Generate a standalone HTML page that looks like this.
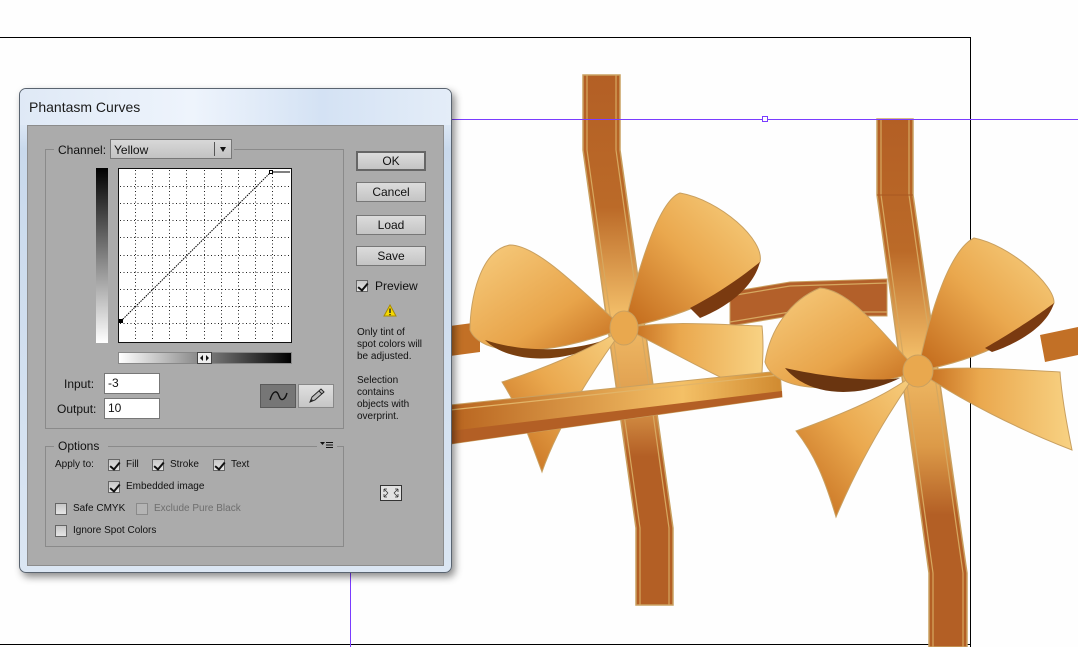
<!DOCTYPE html>
<html><head><meta charset="utf-8"><style>
*{margin:0;padding:0;box-sizing:border-box}
body{width:1078px;height:647px;position:relative;background:#fefefe;overflow:hidden;font-family:"Liberation Sans",sans-serif;color:#111}
.a{position:absolute}
.t{position:absolute;font-size:12px;line-height:14px;white-space:nowrap}
.s{position:absolute;font-size:10px;line-height:12px;white-space:nowrap}
.btn{position:absolute;left:356px;width:70px;height:20px;border:1px solid #777;background:linear-gradient(#dcdcdc,#c4c4c4);font-size:12px;text-align:center;line-height:18px}
.cb{position:absolute;width:12px;height:12px;border:1px solid #666;background:linear-gradient(#c8c8c8,#e6e6e6)}
.cb.c::after{content:"";position:absolute;left:3px;top:0px;width:4px;height:8px;border:solid #111;border-width:0 2px 2px 0;transform:rotate(40deg)}
.grp{position:absolute;border:1px solid #8a8a8a}
.inp{position:absolute;background:#fff;border:1px solid #777;font-size:12px;line-height:18px;padding-left:3px}
</style></head><body>

<svg class="a" style="left:0;top:0" width="1078" height="647">
<defs>
<linearGradient id="v1" x1="0" y1="75" x2="0" y2="605" gradientUnits="userSpaceOnUse"><stop offset="0" stop-color="#b35f25"/><stop offset=".25" stop-color="#bb6a28"/><stop offset=".45" stop-color="#f2bd68"/><stop offset=".6" stop-color="#e0a050"/><stop offset=".72" stop-color="#b35f25"/><stop offset="1" stop-color="#b35f25"/></linearGradient>
<linearGradient id="v2" x1="0" y1="119" x2="0" y2="647" gradientUnits="userSpaceOnUse"><stop offset="0" stop-color="#b35f25"/><stop offset=".25" stop-color="#bb6a28"/><stop offset=".45" stop-color="#f2bd68"/><stop offset=".62" stop-color="#dc9a48"/><stop offset=".75" stop-color="#b35f25"/><stop offset="1" stop-color="#b35f25"/></linearGradient>
<linearGradient id="hb" x1="0" y1="0" x2="1" y2="0"><stop offset="0" stop-color="#b8641f"/><stop offset=".7" stop-color="#f4c066"/><stop offset="1" stop-color="#d08a30"/></linearGradient>
<linearGradient id="g1" x1="0" y1="0" x2="1" y2="1"><stop offset="0" stop-color="#f7cd7f"/><stop offset=".6" stop-color="#e8a44a"/><stop offset="1" stop-color="#c26a1c"/></linearGradient>
<linearGradient id="g2" x1="1" y1="0" x2="0" y2="1"><stop offset="0" stop-color="#f8d283"/><stop offset=".5" stop-color="#eaa84e"/><stop offset="1" stop-color="#c06618"/></linearGradient>
<linearGradient id="g3" x1="1" y1="0" x2="0" y2="0"><stop offset="0" stop-color="#f8d283"/><stop offset=".6" stop-color="#eaa84e"/><stop offset="1" stop-color="#c06618"/></linearGradient>
</defs>
<line x1="0" y1="37.5" x2="970" y2="37.5" stroke="#000"/>
<line x1="970.5" y1="37" x2="970.5" y2="647" stroke="#000"/>
<line x1="0" y1="644.5" x2="970" y2="644.5" stroke="#000"/>
<!-- back ribbons -->
<polygon points="730,292 790,282 887,279 887,316 790,316 730,326" fill="#b3602a" stroke="#c9a060"/>
<polyline points="730,296 790,286 887,283" fill="none" stroke="#d6a860" stroke-width="1.2"/>
<polyline points="730,322 790,312 887,312" fill="none" stroke="#d6a860" stroke-width="1.2"/>
<polygon points="450,326 480,322 480,352 450,356" fill="#c27026"/>
<polygon points="1040,335 1078,327 1078,355 1045,362" fill="#c27026"/>
<!-- vertical ribbons -->
<polygon points="583,75 620,75 620,150 673,528 673,605 636,605 636,528 583,150" fill="url(#v1)" stroke="#c9a060" stroke-width="1.5"/>
<polyline points="587,75 587,150 640,528 640,605" fill="none" stroke="#d6a860" stroke-width="1.2"/>
<polyline points="616,75 616,150 669,528 669,605" fill="none" stroke="#d6a860" stroke-width="1.2"/>
<polygon points="877,119 913,119 913,195 967,573 967,647 929,647 929,573 877,195" fill="url(#v2)" stroke="#c9a060" stroke-width="1.5"/>
<polyline points="881,119 881,195 933,573 933,647" fill="none" stroke="#d6a860" stroke-width="1.2"/>
<polyline points="909,119 909,195 963,573 963,647" fill="none" stroke="#d6a860" stroke-width="1.2"/>
<line x1="877" y1="195" x2="913" y2="195" stroke="#a85822"/>
<!-- bow 1 -->
<path d="M624,328 C590,300 540,245 510,245 C480,250 470,300 470,330 C480,355 540,360 624,328Z" fill="url(#g1)" stroke="#c9a060"/>
<path d="M485,340 C530,355 580,350 610,338 C570,365 510,365 485,340Z" fill="#7a4010"/>
<path d="M624,328 C640,260 660,200 680,193 C720,200 765,240 760,262 C740,290 690,315 624,328Z" fill="url(#g2)" stroke="#c9a060"/>
<path d="M690,308 C725,290 750,270 760,262 C752,292 720,310 700,318Z" fill="#7a3a10"/>
<path d="M624,328 C670,320 720,325 762,326 C765,355 760,380 762,395 C720,380 670,350 624,328Z" fill="url(#g3)" stroke="#c9a060"/>
<path d="M624,328 C600,360 560,420 542,472 C530,440 520,410 502,382 C540,370 590,350 624,328Z" fill="url(#g2)" stroke="#c9a060"/>
<!-- front diagonal ribbon -->
<polygon points="450,405 780,371 782,397 450,444" fill="url(#hb)" stroke="#c9a060"/>
<polygon points="450,431 782,391 782,397 450,444" fill="#b35f25"/>
<line x1="450" y1="410" x2="780" y2="375" stroke="#e2b468" stroke-width="1.2"/>
<ellipse cx="624" cy="328" rx="14" ry="17" fill="#e9a84e" stroke="#c9a060"/>
<!-- bow 2 -->
<path d="M918,371 C880,330 850,290 820,288 C790,300 770,330 765,362 C775,395 850,395 918,371Z" fill="url(#g1)" stroke="#c9a060"/>
<path d="M785,368 C830,378 875,382 900,378 C860,398 810,398 785,368Z" fill="#6a3510"/>
<path d="M918,371 C930,310 950,250 974,238 C1010,245 1055,285 1054,303 C1040,330 980,360 918,371Z" fill="url(#g2)" stroke="#c9a060"/>
<path d="M985,348 C1020,328 1045,310 1054,303 C1046,330 1010,346 992,352Z" fill="#7a3a10"/>
<path d="M918,371 C960,365 1020,370 1060,372 C1062,400 1068,430 1072,450 C1020,430 960,400 918,371Z" fill="url(#g3)" stroke="#c9a060"/>
<path d="M918,371 C890,410 860,460 836,517 C825,480 815,455 796,431 C840,415 890,395 918,371Z" fill="url(#g2)" stroke="#c9a060"/>
<ellipse cx="918" cy="371" rx="15" ry="16" fill="#e9a84e" stroke="#c9a060"/>
<line x1="450" y1="119.5" x2="1078" y2="119.5" stroke="#7a3cff"/>
<rect x="762.5" y="116.5" width="5" height="5" fill="#fff" stroke="#7a3cff"/>
<line x1="350.5" y1="565" x2="350.5" y2="647" stroke="#7a3cff"/>
</svg>

<!-- dialog -->
<div class="a" style="left:19px;top:88px;width:433px;height:485px;border-radius:7px;border:1px solid #5a6470;background:linear-gradient(180deg,#d6e3f2 0,#e8f0fa 20px,#c9d9ec 60px,#dbe6f3 100%);box-shadow:3px 4px 8px rgba(0,0,0,.45)"></div>
<div class="a" style="left:20px;top:89px;width:431px;height:36px;border-radius:6px 6px 0 0;background:linear-gradient(90deg,#dfe9f6,#eef4fc 40%,#d4e2f4 70%,#e4edf8)"></div>
<div class="t" style="left:29px;top:99px;font-size:14px;line-height:17px;color:#1a1a1a">Phantasm Curves</div>
<div class="a" style="left:27px;top:125px;width:417px;height:441px;background:#ababab;border:1px solid #8c8c8c"></div>

<div class="grp" style="left:45px;top:149px;width:299px;height:280px"></div>
<div class="a" style="left:54px;top:140px;width:180px;height:20px;background:#ababab"></div>
<div class="t" style="left:58px;top:143px">Channel:</div>
<div class="a" style="left:110px;top:139px;width:122px;height:20px;border:1px solid #777;background:linear-gradient(#d8d8d8,#c2c2c2)"></div>
<div class="t" style="left:114px;top:143px">Yellow</div>
<div class="a" style="left:214px;top:142px;width:1px;height:14px;background:#555"></div>
<div class="a" style="left:220px;top:147px;border-left:3.5px solid transparent;border-right:3.5px solid transparent;border-top:5px solid #111"></div>

<div class="a" style="left:96px;top:168px;width:12px;height:175px;background:linear-gradient(#000,#fff)"></div>
<svg class="a" style="left:118px;top:168px" width="174" height="175">
<rect x="0.5" y="0.5" width="173" height="174" fill="#fff" stroke="#111"/>
<g stroke="#222" stroke-dasharray="1,2.5">
<line x1="17.5" y1="2" x2="17.5" y2="173"/><line x1="34.5" y1="2" x2="34.5" y2="173"/><line x1="51.5" y1="2" x2="51.5" y2="173"/><line x1="68.5" y1="2" x2="68.5" y2="173"/><line x1="86.5" y1="2" x2="86.5" y2="173"/><line x1="103.5" y1="2" x2="103.5" y2="173"/><line x1="120.5" y1="2" x2="120.5" y2="173"/><line x1="137.5" y1="2" x2="137.5" y2="173"/><line x1="154.5" y1="2" x2="154.5" y2="173"/>
<line x1="2" y1="18.5" x2="172" y2="18.5"/><line x1="2" y1="35.5" x2="172" y2="35.5"/><line x1="2" y1="52.5" x2="172" y2="52.5"/><line x1="2" y1="69.5" x2="172" y2="69.5"/><line x1="2" y1="87.5" x2="172" y2="87.5"/><line x1="2" y1="104.5" x2="172" y2="104.5"/><line x1="2" y1="121.5" x2="172" y2="121.5"/><line x1="2" y1="138.5" x2="172" y2="138.5"/><line x1="2" y1="155.5" x2="172" y2="155.5"/>
</g>
<line x1="3" y1="153" x2="153" y2="4" stroke="#000" stroke-dasharray="1.5,1"/>
<line x1="153" y1="4" x2="172" y2="4" stroke="#000"/>
<rect x="1" y="151" width="4" height="4" fill="#000"/>
<rect x="151.5" y="2.5" width="3" height="3" fill="#fff" stroke="#000"/>
</svg>
<div class="a" style="left:118px;top:352px;width:174px;height:12px;background:linear-gradient(90deg,#fff,#000);border:1px solid #888"></div>
<svg class="a" style="left:197px;top:352px" width="15" height="12"><rect x="0.5" y="0.5" width="14" height="11" fill="#eee" stroke="#444"/><path d="M6,3 L3,6 L6,9Z M9,3 L12,6 L9,9Z" fill="#111"/></svg>

<div class="t" style="left:64px;top:377px">Input:</div>
<div class="inp" style="left:104px;top:373px;width:56px;height:21px">-3</div>
<div class="t" style="left:57px;top:402px">Output:</div>
<div class="inp" style="left:104px;top:398px;width:56px;height:21px">10</div>

<div class="a" style="left:260px;top:384px;width:36px;height:24px;background:#767676;border:1px solid #5a5a5a"></div>
<svg class="a" style="left:260px;top:384px" width="36" height="24"><path d="M10,16 C13,6 17,6 19,12 C21,18 25,16 27,9" fill="none" stroke="#111" stroke-width="1.4"/></svg>
<div class="a" style="left:298px;top:384px;width:36px;height:24px;background:linear-gradient(#e0e0e0,#c6c6c6);border:1px solid #888"></div>
<svg class="a" style="left:298px;top:384px" width="36" height="24"><path d="M12,18 L14,13 L23,5 L26,8 L17,16Z" fill="#bbb" stroke="#222"/><path d="M12,18 L14,15 L15,17Z" fill="#222"/><path d="M21,7 L24,10" stroke="#222"/></svg>

<div class="btn" style="top:151px;border:2px solid #666;line-height:17px">OK</div>
<div class="btn" style="top:182px">Cancel</div>
<div class="btn" style="top:215px">Load</div>
<div class="btn" style="top:246px">Save</div>
<div class="cb c" style="left:356px;top:280px"></div>
<div class="t" style="left:375px;top:279px">Preview</div>
<svg class="a" style="left:383px;top:304px" width="14" height="13"><path d="M7,1 L13,12 L1,12Z" fill="#f5d800" stroke="#a88a00"/><rect x="6.3" y="4.5" width="1.4" height="4.5" fill="#222"/><rect x="6.3" y="10" width="1.4" height="1.2" fill="#222"/></svg>
<div class="s" style="left:357px;top:327px">Only tint of<br>spot colors will<br>be adjusted.</div>
<div class="s" style="left:357px;top:375px">Selection<br>contains<br>objects with<br>overprint.</div>
<svg class="a" style="left:380px;top:485px" width="22" height="16"><rect x="0.5" y="0.5" width="21" height="15" fill="#e2e2e2" stroke="#333"/><path d="M4,4 L8,8 M4,4 h3 M4,4 v3 M18,4 L14,8 M18,4 h-3 M18,4 v3 M4,12 L8,8 M4,12 h3 M4,12 v-3 M18,12 L14,8 M18,12 h-3 M18,12 v-3" stroke="#333" fill="none" stroke-width=".8"/></svg>

<div class="grp" style="left:45px;top:446px;width:299px;height:101px"></div>
<div class="a" style="left:54px;top:439px;width:54px;height:14px;background:#ababab"></div>
<div class="t" style="left:58px;top:439px">Options</div>
<div class="a" style="left:317px;top:439px;width:20px;height:12px;background:#ababab"></div>
<svg class="a" style="left:319px;top:440px" width="16" height="10"><path d="M1,2 L6,2 L3.5,5Z" fill="#111"/><path d="M7,2.5 h7 M7,5 h7 M7,7.5 h7" stroke="#111"/></svg>
<div class="s" style="left:55px;top:459px">Apply to:</div>
<div class="cb c" style="left:108px;top:459px"></div><div class="s" style="left:126px;top:459px">Fill</div>
<div class="cb c" style="left:152px;top:459px"></div><div class="s" style="left:170px;top:459px">Stroke</div>
<div class="cb c" style="left:213px;top:459px"></div><div class="s" style="left:231px;top:459px">Text</div>
<div class="cb c" style="left:108px;top:481px"></div><div class="s" style="left:126px;top:481px">Embedded image</div>
<div class="cb" style="left:55px;top:503px"></div><div class="s" style="left:73px;top:503px">Safe CMYK</div>
<div class="cb" style="left:136px;top:503px;border-color:#8a8a8a;background:#b4b4b4"></div><div class="s" style="left:154px;top:503px;color:#6e6e6e">Exclude Pure Black</div>
<div class="cb" style="left:55px;top:525px"></div><div class="s" style="left:73px;top:525px">Ignore Spot Colors</div>
</body></html>
